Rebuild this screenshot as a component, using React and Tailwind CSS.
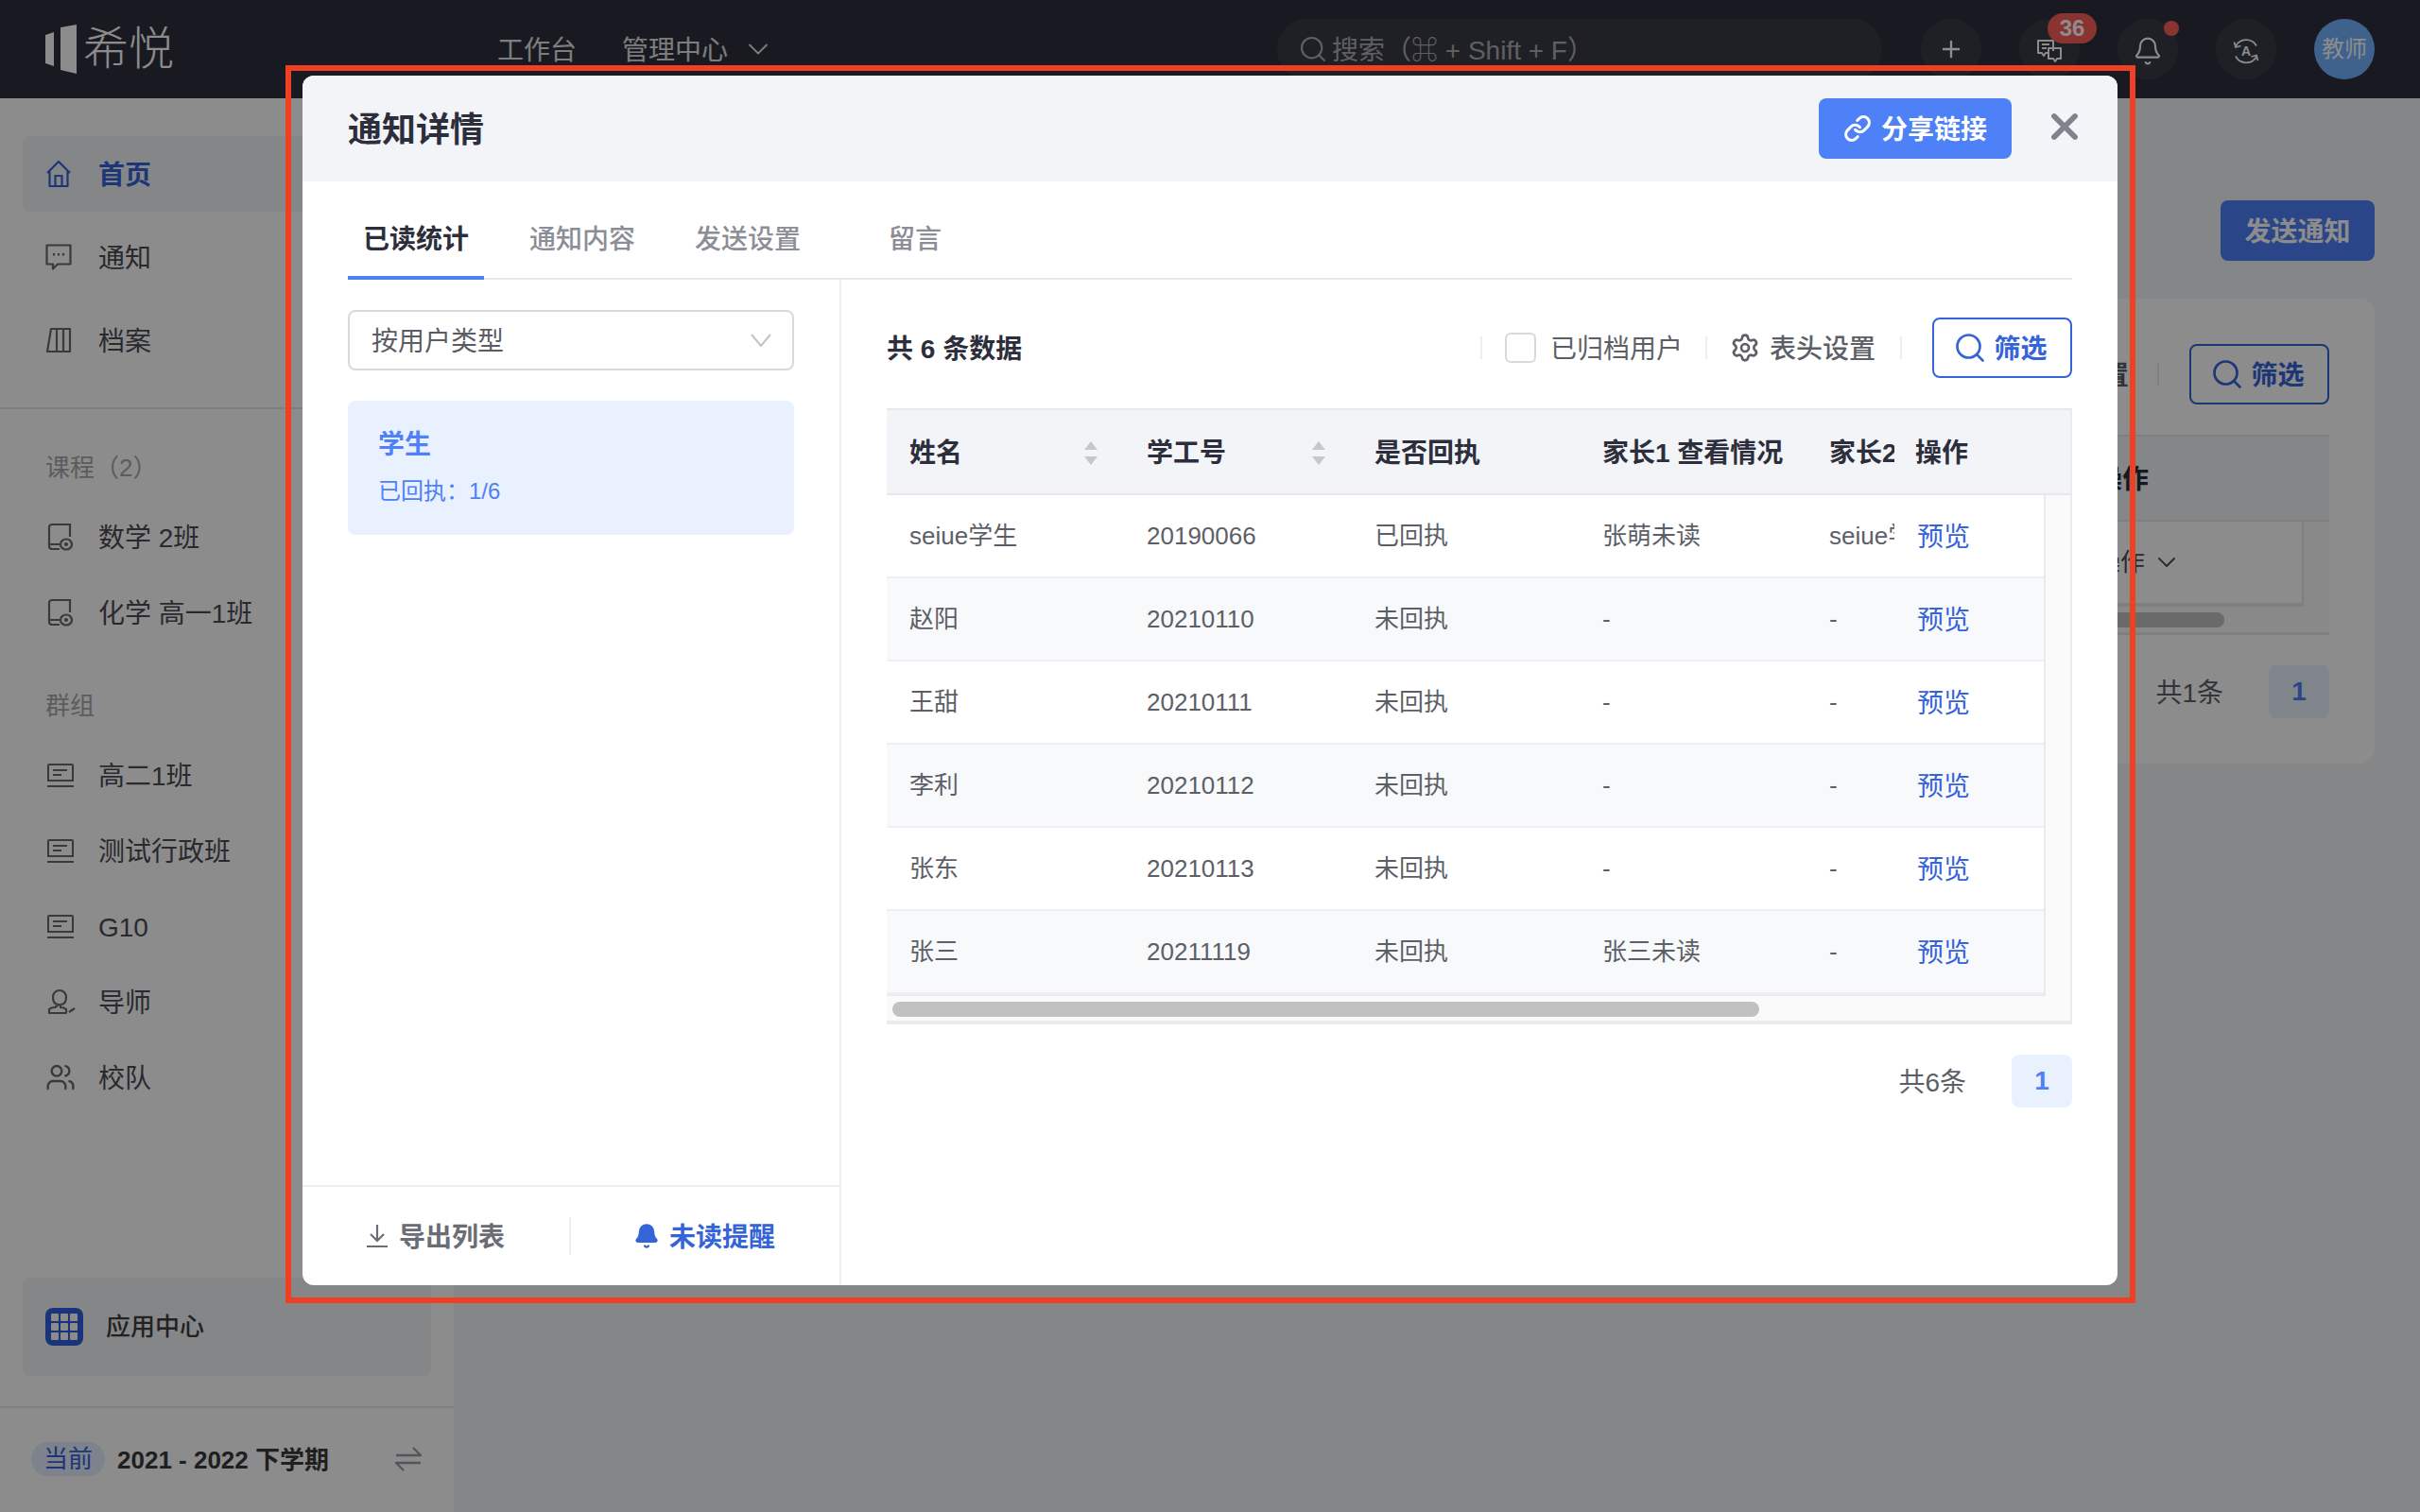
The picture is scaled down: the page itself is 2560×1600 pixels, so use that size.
import React from "react";
import { Bell, ChevronDown, Link, Plus, Search, Settings, Users, X } from "lucide-react";

const HomeIcon = ({ className }) => (
  <svg viewBox="0 0 28 30" className={className} fill="none" stroke="currentColor" strokeWidth="2.2">
    <path d="M2 14 14 2l12 12M4.500 12v16h19V12" strokeLinejoin="round" />
    <path d="M10.500 28V17h7v11" />
  </svg>
);

const NoticeIcon = ({ className }) => (
  <svg viewBox="0 0 28 28" className={className} fill="none" stroke="currentColor" strokeWidth="2.2">
    <path d="M1.500 1.500h25v20H13l-5 5v-5H1.500z" strokeLinejoin="round" />
    <path d="M9 10v2.500M14 10v2.500M19 10v2.500" />
  </svg>
);

const ArchiveIcon = ({ className }) => (
  <svg viewBox="0 0 28 28" className={className} fill="none" stroke="currentColor" strokeWidth="2.2">
    <path d="M6 2h20v24H2zM12 2v24M19 2v24" strokeLinejoin="round" />
  </svg>
);

const CourseIcon = ({ className }) => (
  <svg viewBox="0 0 27 30" className={className} fill="none" stroke="currentColor" strokeWidth="2.2">
    <path d="M24 15V2H5a3 3 0 0 0-3 3v20a3 3 0 0 0 3 3h8M2 23h11" />
    <ellipse cx="20" cy="23" rx="6" ry="5.500" />
    <circle cx="20" cy="23" r="1" />
  </svg>
);

const GroupIcon = ({ className }) => (
  <svg viewBox="0 0 28 25" className={className} fill="none" stroke="currentColor" strokeWidth="2">
    <path d="M1 18V2a1 1 0 0 1 1-1h24a1 1 0 0 1 1 1v16zM0 24h28M6 7h15M6 12h9" />
  </svg>
);

const TutorIcon = ({ className }) => (
  <svg viewBox="0 0 30 28" className={className} fill="none" stroke="currentColor" strokeWidth="2.2">
    <path d="M12 17c-4 0-6-3-6-8a7 7 0 0 1 14 0c0 5-2 8-6 8v3c3 0 5 1 6 2v4H2v-4c1-1 3-2 6-2z" strokeLinejoin="round" />
    <path d="m23 25 6-4" />
  </svg>
);

const ChatIcon = ({ className }) => (
  <svg viewBox="0 0 26 24" className={className} fill="none" stroke="currentColor" strokeWidth="2">
    <path d="M17 12V1H1v13h4l2 3 2-3h3M5 5h8M5 9h5" strokeLinejoin="round" />
    <path d="M12 9h13v11h-4l-2 3-2-3h-5z" strokeLinejoin="round" />
  </svg>
);

// circular arrows around a letter A
const SyncAIcon = ({ className }) => (
  <svg viewBox="0 0 28 28" className={className} fill="none" stroke="currentColor" strokeWidth="1.8">
    <path d="M25 8.500A12.500 12.500 0 0 0 3 9M3 19.500a12.500 12.500 0 0 0 22 .5" />
    <path d="M1.500 4.500 3 10l5.500-1.500M26.500 24 25 18.500 19.500 20" />
    <text x="14" y="19" textAnchor="middle" fontSize="14" fontWeight="700" fill="currentColor" stroke="none">A</text>
  </svg>
);

const SwapIcon = ({ className }) => (
  <svg viewBox="0 0 28 26" className={className} fill="none" stroke="currentColor" strokeWidth="2.400">
    <path d="M1 9h26L19 1M27 17H1l8 8" strokeLinejoin="round" />
  </svg>
);

const SortIcon = () => (
  <span className="flex flex-col gap-[7px] text-[#c5c7cc]">
    <svg viewBox="0 0 16 9" className="h-[9px] w-4" fill="currentColor"><path d="M8 0l7 9H1z" /></svg>
    <svg viewBox="0 0 16 9" className="h-[9px] w-4" fill="currentColor"><path d="M8 9 1 0h14z" /></svg>
  </span>
);

const LogoMark = () => (
  <svg viewBox="0 0 34 52" className="h-[52px] w-[34px] text-white" fill="currentColor">
    <path d="M0 11 9 8v36l-9-3z" />
    <path d="M16 3 33 0v52l-17-4z" />
  </svg>
);

const courses = ["数学 2班", "化学 高一1班"];

const groups = [
  { name: "高二1班", Icon: GroupIcon, size: "h-[25px] w-7" },
  { name: "测试行政班", Icon: GroupIcon, size: "h-[25px] w-7" },
  { name: "G10", Icon: GroupIcon, size: "h-[25px] w-7" },
  { name: "导师", Icon: TutorIcon, size: "h-7 w-[30px]" },
  { name: "校队", Icon: Users, size: "h-[32px] w-[32px] -ml-[2px]" },
];

const students = [
  { name: "seiue学生", id: "20190066", receipt: "已回执", parent1: "张萌未读", parent2: "seiue学生家长未读" },
  { name: "赵阳", id: "20210110", receipt: "未回执", parent1: "-", parent2: "-" },
  { name: "王甜", id: "20210111", receipt: "未回执", parent1: "-", parent2: "-" },
  { name: "李利", id: "20210112", receipt: "未回执", parent1: "-", parent2: "-" },
  { name: "张东", id: "20210113", receipt: "未回执", parent1: "-", parent2: "-" },
  { name: "张三", id: "20211119", receipt: "未回执", parent1: "张三未读", parent2: "-" },
];

const SideItem = ({ icon, label }) => (
  <div className="flex h-20 items-center pl-[50px] text-[28px] text-[#4c4c54]">
    <span className="flex w-[54px] items-center text-[#6a6a72]">{icon}</span>
    <span className="pt-[3px]">{label}</span>
  </div>
);

const HeaderButton = ({ children }) => (
  <div className="flex h-16 w-16 items-center justify-center rounded-full bg-white/5 text-white">
    {children}
  </div>
);

const App = () => {
  return (
    <div className="relative h-[1600px] w-[2560px] overflow-hidden bg-[#f2f4f7] [font-family:'Liberation_Sans','Noto_Sans_CJK_SC',sans-serif]">
      {/* Top bar */}
      <header className="flex h-[104px] items-center bg-[#2f313c] pl-12 pr-12">
        <LogoMark />
        <span className="ml-[6px] text-[48px] font-light leading-none text-white">希悦</span>
        <nav className="ml-[342px] flex items-center text-[28px] text-[#e3e3e3]">
          <span className="pt-[3px]">工作台</span>
          <span className="ml-[48px] pt-[3px]">管理中心</span>
          <ChevronDown className="ml-[14px] h-9 w-9" strokeWidth={1.2} />
        </nav>
        <div className="ml-auto flex items-center gap-10">
          <div className="mr-[1px] flex h-16 w-[640px] items-center rounded-full bg-white/5 pl-[22px] text-[28px] text-[#adadb2]">
            <Search className="h-8 w-8" strokeWidth={1.6} />
            <span className="ml-1 pt-[3px]">搜索（⌘ + Shift + F）</span>
          </div>
          <HeaderButton><Plus className="h-7 w-7" strokeWidth={2} /></HeaderButton>
          <div className="relative">
            <HeaderButton><ChatIcon className="mt-1 h-6 w-[26px]" /></HeaderButton>
            <span className="absolute left-[30px] top-[-6px] flex h-8 w-[52px] items-center justify-center rounded-full bg-[#fb5f5a] text-[24px] font-semibold text-white">36</span>
          </div>
          <div className="relative">
            <HeaderButton><Bell className="mt-1 h-8 w-8" strokeWidth={1.6} /></HeaderButton>
            <span className="absolute left-[49px] top-0.5 h-4 w-4 rounded-full bg-[#fb5f5a]" />
          </div>
          <HeaderButton><SyncAIcon className="mt-1 h-7 w-7" /></HeaderButton>
          <div className="flex h-16 w-16 items-center justify-center rounded-full bg-[#73b2ff] text-[24px] text-white">教师</div>
        </div>
      </header>

      <div className="flex h-[1496px]">
        {/* Sidebar */}
        <aside className="flex w-[480px] flex-col bg-white">
          <div className="flex flex-col gap-2 border-b-2 border-[#e8e8ea] px-6 pb-[31px] pt-10">
            <div className="flex h-20 items-center rounded-lg bg-[#f2f4f7] pl-6 text-[28px] font-semibold text-[#3563d8]">
              <HomeIcon className="h-[30px] w-7" />
              <span className="ml-7 pt-[3px]">首页</span>
            </div>
            <div className="flex h-20 items-center pl-6 text-[28px] text-[#4c4c54]">
              <NoticeIcon className="h-7 w-7 text-[#6a6a72]" />
              <span className="ml-7 pt-[3px]">通知</span>
            </div>
            <div className="flex h-20 items-center pl-6 text-[28px] text-[#4c4c54]">
              <ArchiveIcon className="h-7 w-7 text-[#6a6a72]" />
              <span className="ml-7 pt-[3px]">档案</span>
            </div>
          </div>
          <div className="ml-12 mt-[42px] text-[26px] leading-[40px] text-[#a8a8ab]">课程（2）</div>
          <div className="mt-[13px]">
            {courses.map((name) => (
              <SideItem key={name} label={name} icon={<CourseIcon className="h-[30px] w-[27px]" />} />
            ))}
          </div>
          <div className="ml-12 mt-[39px] text-[26px] leading-[40px] text-[#a8a8ab]">群组</div>
          <div className="mt-[13px]">
            {groups.map(({ name, Icon, size }) => (
              <SideItem key={name} label={name} icon={<Icon className={size} strokeWidth={1.8} />} />
            ))}
          </div>
          <div className="mx-6 mt-[172px] flex h-[104px] items-center rounded-lg bg-[#f2f4f7] pl-6">
            <div className="grid h-10 w-10 grid-cols-3 gap-[2px] rounded-lg bg-[#2f60da] p-[6px]">
              {[0, 1, 2, 3, 4, 5, 6, 7, 8].map((i) => (
                <span key={i} className="rounded-[1px] bg-white" />
              ))}
            </div>
            <span className="ml-6 text-[26px] font-medium text-[#3e3e3e]">应用中心</span>
          </div>
          <div className="mt-8 flex h-[110px] items-center border-t-2 border-[#e8e8ea] pl-[33px] pr-[34px]">
            <span className="flex h-9 w-[78px] items-center justify-center rounded-full bg-[#e5edff] text-[26px] text-[#3563d8]">当前</span>
            <span className="ml-[13px] pt-[3px] text-[26px] font-semibold text-[#3a3a3a]">2021 - 2022 下学期</span>
            <SwapIcon className="ml-auto h-[26px] w-7 text-[#9a9ca4]" />
          </div>
        </aside>

        {/* Page behind the dialog */}
        <main className="flex-1 px-12 pt-[108px]">
          <div className="flex justify-end">
            <div className="flex h-16 w-[163px] items-center justify-center rounded-lg bg-[#4e80f7] pt-[3px] text-[28px] font-semibold text-white">发送通知</div>
          </div>
          <div className="mt-10 h-[492px] rounded-2xl bg-white p-12">
            <div className="flex h-16 items-center justify-end">
              <span className="pt-[3px] text-[28px] font-semibold text-[#5d5f68]">表头设置</span>
              <span className="ml-[30px] h-6 w-[2px] bg-[#e8e8ea]" />
              <div className="ml-[32px] flex h-16 w-[148px] items-center justify-center gap-[7px] rounded-lg border-2 border-[#3563d8] pr-1 text-[28px] font-semibold text-[#3563d8]">
                <Search className="h-9 w-9" strokeWidth={1.8} />
                <span className="pt-[3px]">筛选</span>
              </div>
            </div>
            <div className="mt-8 border-b-[3px] border-[#e8e8ea] bg-[#fafafa]">
              <div className="flex h-[92px] items-center justify-end border-y-2 border-[#e8e8ea] bg-[#f2f4f8] pr-[191px] pt-[3px] text-[28px] font-semibold text-[#2c2f3b]">操作</div>
              <div className="mr-[27px] flex h-[90px] items-center justify-end border-b-4 border-r-2 border-[#e8e8ea] bg-white pr-[127px] text-[26px] text-[#4c4c54]">
                操作
                <ChevronDown className="ml-[7px] h-8 w-8" strokeWidth={1.4} />
              </div>
              <div className="flex h-[27px] items-center justify-end pr-[111px]">
                <div className="h-4 w-[200px] rounded-full bg-[#c1c1c1]" />
              </div>
            </div>
            <div className="mt-8 flex items-center justify-end">
              <span className="pt-[3px] text-[28px] text-[#5d5f68]">共1条</span>
              <span className="ml-[48px] flex h-14 w-16 items-center justify-center rounded-lg bg-[#eaf1fe] text-[28px] font-semibold text-[#4e80f7]">1</span>
            </div>
          </div>
        </main>
      </div>

      {/* Dim layer */}
      <div className="absolute inset-0 bg-black/45" />

      {/* Dialog */}
      <div className="absolute left-[320px] top-[80px] flex h-[1280px] w-[1920px] flex-col overflow-hidden rounded-xl bg-white">
        <div className="flex h-[112px] shrink-0 items-center bg-[#f2f4f8] pl-12 pr-[34px]">
          <h2 className="pt-[3px] text-[36px] font-semibold text-[#2c2f3b]">通知详情</h2>
          <button className="ml-auto flex h-16 w-[204px] items-center justify-center gap-[10px] rounded-lg bg-[#4e80f7] text-[28px] font-semibold text-white">
            <Link className="h-[30px] w-[30px]" strokeWidth={2.4} />
            <span className="pt-[3px]">分享链接</span>
          </button>
          <X className="ml-[34px] mt-[-4px] h-[44px] w-[44px] text-[#80838c]" strokeWidth={3.2} />
        </div>

        {/* Tabs */}
        <div className="mx-12 flex h-[104px] shrink-0 border-b-2 border-[#e8e8ea] text-[28px] font-medium text-[#8c8e96]">
          <div className="flex h-[104px] w-[144px] items-center justify-center border-b-4 border-[#4e80f7] pt-[23px] font-semibold text-[#2c2f3b]">已读统计</div>
          <span className="ml-[48px] flex h-[104px] items-center pt-[19px]">通知内容</span>
          <span className="ml-[63px] flex h-[104px] items-center pt-[19px]">发送设置</span>
          <span className="ml-[93px] flex h-[104px] items-center pt-[19px]">留言</span>
        </div>

        <div className="flex min-h-0 flex-1">
          {/* Left panel */}
          <div className="flex w-[570px] shrink-0 flex-col border-r-2 border-[#eeeeef]">
            <div className="flex-1 px-12 pt-8">
              <div className="flex h-16 items-center justify-between rounded-lg border-2 border-[#d9d9d9] pl-[23px] pr-[22px] text-[28px] text-[#5b5c64]">
                <span className="pt-[3px]">按用户类型</span>
                <svg viewBox="0 0 22 14" className="h-[14px] w-[22px] text-[#c4c4c4]" fill="none" stroke="currentColor" strokeWidth="2"><path d="m1 1 10 12L21 1" /></svg>
              </div>
              <div className="mt-8 h-[142px] rounded-lg bg-[#eaf1fe] pl-8 pt-[26px] text-[#4e80f7]">
                <div className="text-[28px] font-semibold leading-[42px]">学生</div>
                <div className="mt-[10px] text-[24px] leading-[36px]">已回执：1/6</div>
              </div>
            </div>
            <div className="flex h-[106px] items-center border-t-2 border-[#eeeeef] text-[28px] font-semibold">
              <div className="flex flex-1 items-center justify-center gap-3 text-[#6a6c76]">
                <svg viewBox="0 0 22 26" className="h-[26px] w-[22px]" fill="none" stroke="currentColor" strokeWidth="2.200"><path d="M11 1v16M4 11l7 7 7-7M0 24h22" /></svg>
                <span className="pt-[3px]">导出列表</span>
              </div>
              <span className="h-10 w-[2px] bg-[#eeeeef]" />
              <div className="flex flex-1 items-center justify-center gap-[10px] pr-0.5 text-[#3563d8]">
                <Bell className="h-7 w-7" fill="currentColor" strokeWidth={2} />
                <span className="pt-[3px]">未读提醒</span>
              </div>
            </div>
          </div>

          {/* Right panel */}
          <div className="min-w-0 flex-1 pl-12 pr-12">
            <div className="mt-10 flex h-16 items-center text-[28px]">
              <span className="pt-[3px] font-semibold text-[#2c2f3b]">共 6 条数据</span>
              <span className="ml-auto h-6 w-[2px] bg-[#eeeeef]" />
              <span className="ml-6 h-8 w-[33px] rounded-md border-2 border-[#d9d9d9]" />
              <span className="ml-[15px] pt-[3px] text-[#5d5f68]">已归档用户</span>
              <span className="ml-[24px] h-6 w-[2px] bg-[#eeeeef]" />
              <Settings className="ml-6 h-8 w-8 text-[#5d5f68]" strokeWidth={2} />
              <span className="ml-[10px] pt-[3px] font-medium text-[#5d5f68]">表头设置</span>
              <span className="ml-[26px] h-6 w-[2px] bg-[#eeeeef]" />
              <button className="ml-[32px] flex h-16 w-[148px] items-center justify-center gap-[7px] rounded-lg border-2 border-[#3563d8] pr-1 font-semibold text-[#3563d8]">
                <Search className="h-9 w-9" strokeWidth={1.8} />
                <span className="pt-[3px]">筛选</span>
              </button>
            </div>

            {/* Table */}
            <div className="mt-8 border-b-4 border-r-2 border-[#ebebee] bg-[#fafafa]">
              <div className="grid h-[92px] grid-cols-[251px_241px_241px_240px_93px_1fr] items-center border-y-2 border-[#e8e8ea] bg-[#f2f4f8] pt-[3px] text-[28px] font-semibold text-[#2c2f3b]">
                <div className="flex items-center justify-between pl-6 pr-[27px]">姓名<SortIcon /></div>
                <div className="flex items-center justify-between pl-6 pr-[27px]">学工号<SortIcon /></div>
                <div className="pl-6">是否回执</div>
                <div className="pl-6">家长1 查看情况</div>
                <div className="overflow-hidden whitespace-nowrap pl-6">家长2 查看情况</div>
                <div className="pl-[22px]">操作</div>
              </div>
              <div className="mr-[26px] border-b-2 border-r-2 border-[#ebebee] bg-white">
                {students.map((s, i) => (
                  <div
                    key={s.id}
                    className={`grid h-[88px] grid-cols-[251px_241px_241px_240px_93px_1fr] items-center border-b-2 border-[#f0f0f2] text-[26px] text-[#5d5f68] ${
                      i % 2 === 1 ? "bg-[#f8f9fb]" : "bg-white"
                    }`}
                  >
                    <div className="pl-6">{s.name}</div>
                    <div className="pl-6">{s.id}</div>
                    <div className="pl-6">{s.receipt}</div>
                    <div className="pl-6">{s.parent1}</div>
                    <div className="overflow-hidden whitespace-nowrap pl-6">{s.parent2}</div>
                    <div className="pl-6 pt-[3px] text-[28px] text-[#3563d8]">预览</div>
                  </div>
                ))}
              </div>
              <div className="flex h-[26px] items-start pl-1.5 pt-1.5">
                <div className="h-4 w-[917px] rounded-full bg-[#c1c1c1]" />
              </div>
            </div>

            {/* Pagination */}
            <div className="mt-8 flex items-center justify-end">
              <span className="pt-[3px] text-[28px] text-[#5d5f68]">共6条</span>
              <span className="ml-[48px] flex h-14 w-16 items-center justify-center rounded-lg bg-[#eaf1fe] text-[28px] font-semibold text-[#4e80f7]">1</span>
            </div>
          </div>
        </div>
      </div>

      {/* Red annotation frame */}
      <div className="pointer-events-none absolute left-[302px] top-[69px] h-[1310px] w-[1957px] border-[6px] border-[#ee4023]" />
    </div>
  );
};

export default App;
